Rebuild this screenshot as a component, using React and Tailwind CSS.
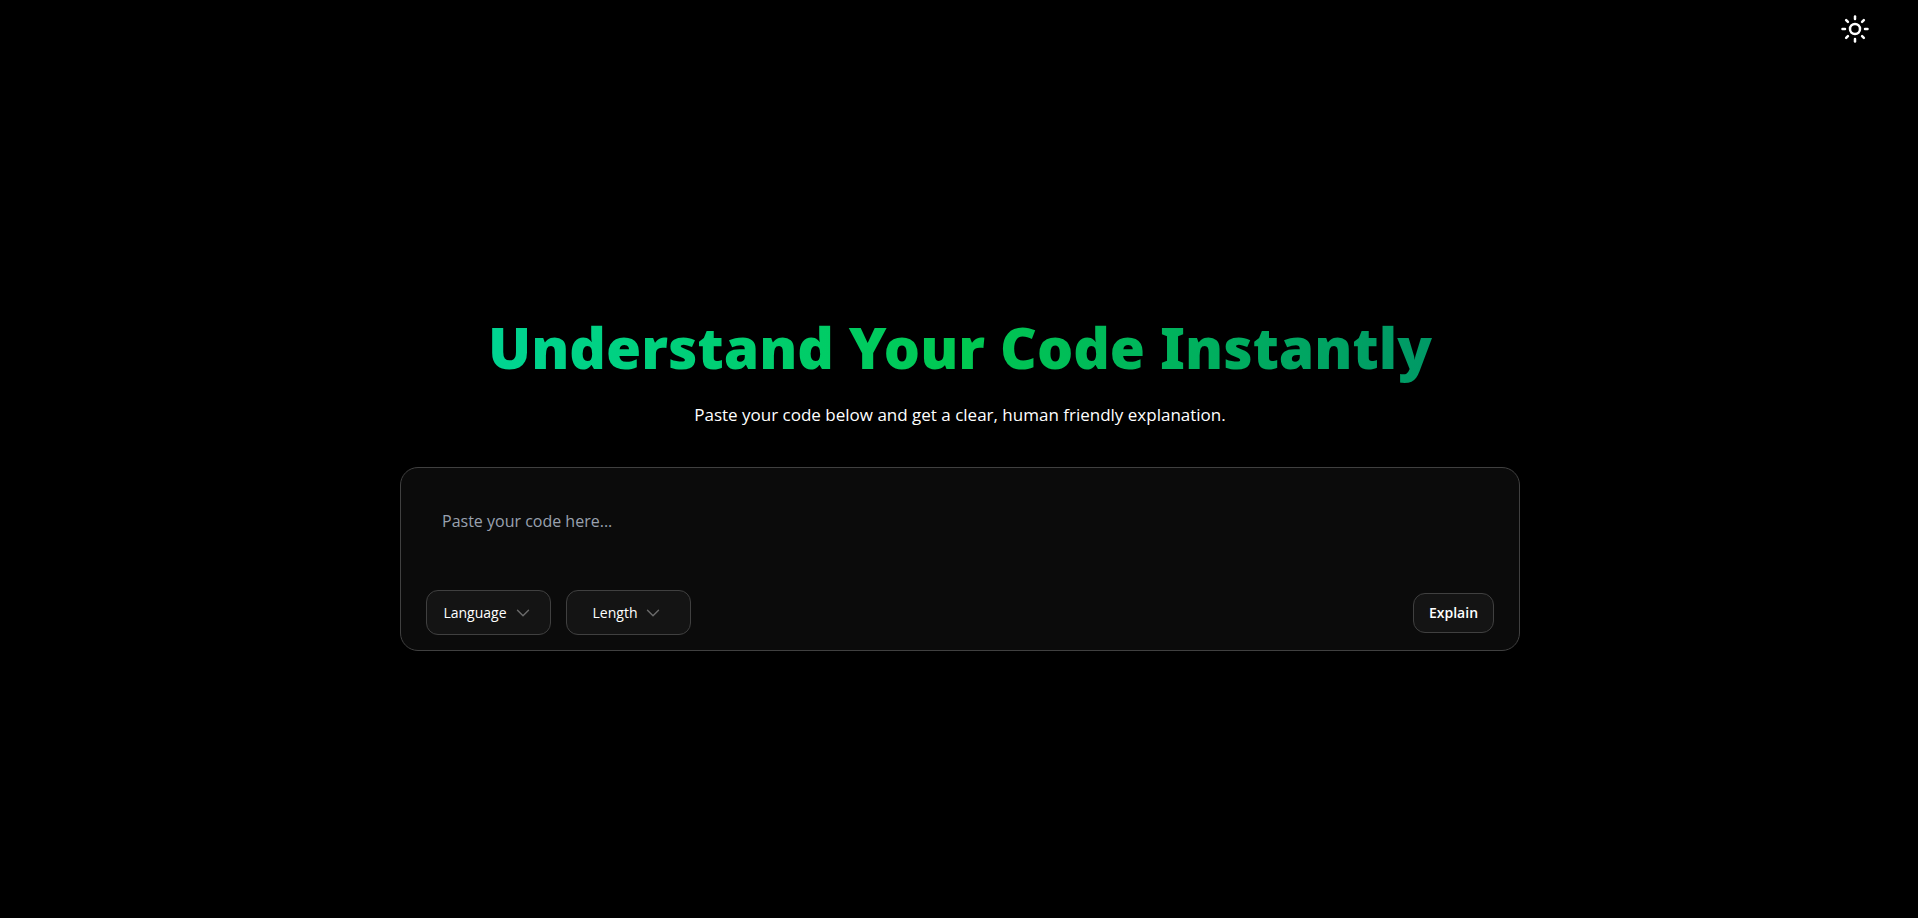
import { ChevronDown, Sun } from "lucide-react";

function PickerButton({ children }) {
  return (
    <button
      type="button"
      aria-haspopup="listbox"
      className="flex h-[45px] w-[125px] items-center justify-center gap-[5px] rounded-xl border border-[#404040] bg-[#141414] text-[14px] leading-5 font-medium text-white"
    >
      {children}
      <ChevronDown size={22} strokeWidth={1.5} className="text-[#6b6b6b]" aria-hidden="true" />
    </button>
  );
}

export default function App() {
  return (
    <div className="flex min-h-screen flex-col bg-black font-['Open_Sans','Noto_Sans',sans-serif] text-white">
      <header className="flex justify-end px-12 pt-3.5 pb-2.5">
        <button type="button" aria-label="Toggle theme">
          <Sun size={30} />
        </button>
      </header>

      <main className="flex flex-1 flex-col items-center justify-center pr-6 pl-6.5">
        <h1 className="bg-linear-to-r from-emerald-400 via-green-500 to-emerald-600 bg-clip-text pb-3 text-center font-['Noto_Sans','Open_Sans',sans-serif] text-[57px] leading-[52px] font-black text-transparent">
          Understand Your Code Instantly
        </h1>
        <p className="mt-4 text-center text-[17px] leading-7">
          Paste your code below and get a clear, human friendly explanation.
        </p>

        <form className="mt-[38px] w-full max-w-[1120px] rounded-[18px] border border-[#404040] bg-[#0b0b0b] px-[25px] pt-[23px] pb-[15px]">
          <textarea
            aria-label="Code"
            placeholder="Paste your code here..."
            rows={2}
            className="block w-full resize-none bg-transparent px-4 pt-4 text-[16px] leading-7 outline-none placeholder:text-[#99a1af]"
          />
          <div className="mt-[27px] flex items-center justify-between">
            <div className="flex gap-[15px]">
              <PickerButton>Language</PickerButton>
              <PickerButton>Length</PickerButton>
            </div>
            <button
              type="submit"
              className="h-10 w-[81px] rounded-xl border border-[#404040] bg-[#141414] text-[14px] leading-5 font-semibold"
            >
              Explain
            </button>
          </div>
        </form>
      </main>
    </div>
  );
}
